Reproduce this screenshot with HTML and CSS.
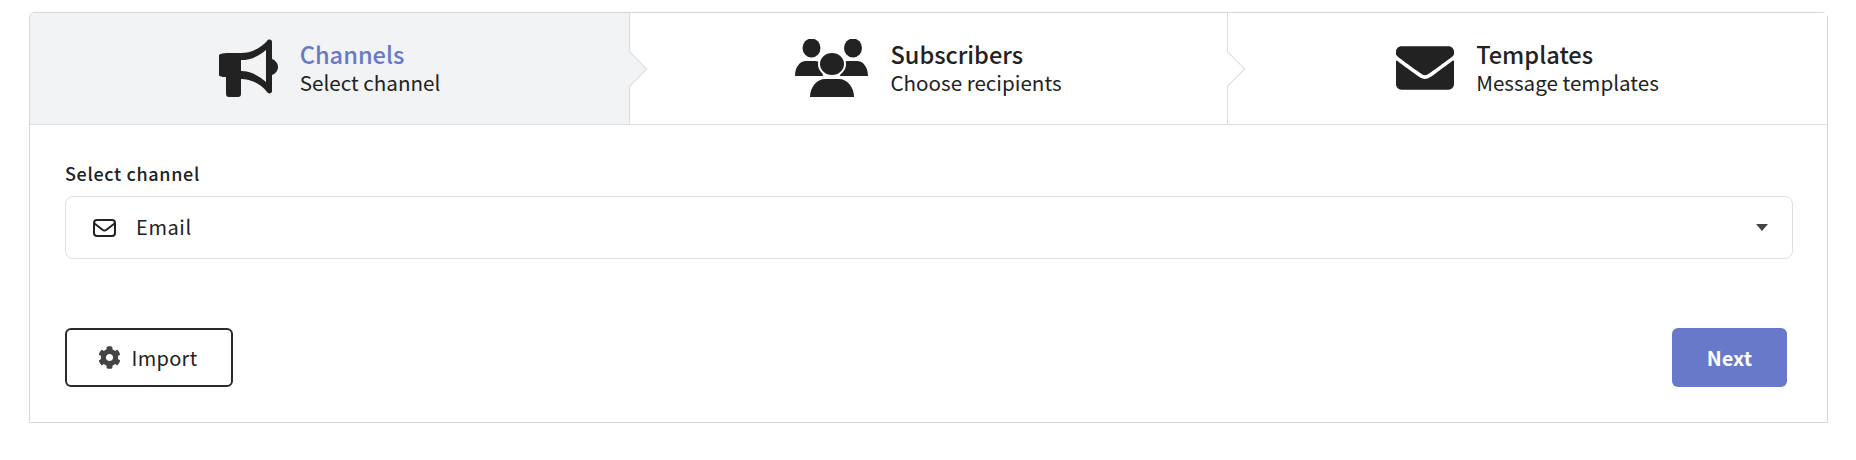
FILE: index.html
```html
<!DOCTYPE html>
<html lang="en">
<head>
  <meta charset="UTF-8" />
  <title>New campaign</title>
  <link rel="stylesheet" href="styles.css">
</head>
<body>
  <div class="card">
    <div class="pasos">
      <div class="paso activo">
        <svg class="icono" width="59" height="58" viewBox="218 39 59 58">
          <path fill="#222" fill-rule="evenodd" d="M226 53h14c10 0 20-5 26-12 1-2 5-2 5 1v17c3 1 6 4 6 8s-3 7-6 8v16c0 3-4 3-5 1-6-8-16-13-26-13v15c0 2-1 3-3 3h-9c-2 0-3-1-3-3V77h-2c-4 0-8-3-8-6V60c0-4 4-7 11-7zm14 7v11c10 0 18 5 25 11V50c-7 6-15 10-25 10z"/>
        </svg>
        <div>
          <div class="paso-titulo">Channels</div>
          <div class="paso-sub">Select channel</div>
        </div>
      </div>
      <div class="paso">
        <svg class="icono" width="73" height="58" viewBox="795 39 73 58">
          <g fill="#222">
            <ellipse cx="811.5" cy="48" rx="9" ry="9.5"/>
            <ellipse cx="853" cy="48" rx="9" ry="9.5"/>
            <path d="M795 76c0-9 5-15 11-15h9c3 0 5 2 6 4l2 11zM868 76c0-9-5-15-11-15h-9c-3 0-5 2-6 4l-2 11z"/>
            <ellipse cx="832" cy="64" rx="13" ry="12" stroke="#fff" stroke-width="2"/>
            <path d="M810 97c0-10 7-18 15-18h14c8 0 15 8 15 18z"/>
          </g>
        </svg>
        <div>
          <div class="paso-titulo">Subscribers</div>
          <div class="paso-sub">Choose recipients</div>
        </div>
      </div>
      <div class="paso">
        <svg class="icono" width="58" height="44" viewBox="0 64 512 384">
          <path fill="#222" d="M502.3 190.8c3.9-3.1 9.7-.2 9.7 4.7V400c0 26.5-21.5 48-48 48H48c-26.5 0-48-21.5-48-48V195.6c0-5 5.7-7.8 9.7-4.7 22.4 17.4 52.1 39.5 154.1 113.6 21.1 15.4 56.7 47.8 92.2 47.6 35.7.3 72-32.8 92.3-47.6 102-74.1 131.6-96.3 154-113.7zM256 320c23.2.4 56.6-29.2 73.4-41.4 132.7-96.3 142.8-104.7 173.4-128.7 5.8-4.5 9.2-11.5 9.2-18.9v-19c0-26.5-21.5-48-48-48H48C21.5 64 0 85.5 0 112v19c0 7.4 3.4 14.3 9.2 18.9 30.6 23.9 40.7 32.4 173.4 128.7 16.8 12.2 50.2 41.8 73.4 41.4z"/>
        </svg>
        <div>
          <div class="paso-titulo">Templates</div>
          <div class="paso-sub">Message templates</div>
        </div>
      </div>
    </div>

    <div class="contenido">
      <div class="etiqueta">Select channel</div>
      <div class="selector">
        <svg width="23" height="18" viewBox="0 0 23 18" fill="none" stroke="#222" stroke-width="2">
          <rect x="1" y="1" width="21" height="16" rx="3"/>
          <path d="M1.5 4.5l8 6.2c1.2.9 2.8.9 4 0l8-6.2"/>
        </svg>
        <span class="selector-texto">Email</span>
        <span class="flecha"></span>
      </div>
      <div class="acciones">
        <button class="btn btn-importar">
          <svg width="23" height="23" viewBox="0 0 512 512">
            <path fill="#444" d="M487.4 315.7l-42.6-24.6c4.3-23.2 4.3-47 0-70.2l42.6-24.6c4.9-2.8 7.1-8.6 5.5-14-11.1-35.6-30-67.8-54.7-94.6-3.8-4.1-10-5.1-14.8-2.3L380.8 110c-17.9-15.4-38.5-27.3-60.8-35.1V25.8c0-5.6-3.9-10.5-9.4-11.7-36.7-8.2-74.3-7.8-109.2 0-5.5 1.2-9.4 6.1-9.4 11.7V75c-22.2 7.9-42.8 19.8-60.8 35.1L88.7 85.5c-4.9-2.8-11-1.9-14.8 2.3-24.7 26.7-43.6 58.9-54.7 94.6-1.7 5.4.6 11.2 5.5 14L67.3 221c-4.3 23.2-4.3 47 0 70.2l-42.6 24.6c-4.9 2.8-7.1 8.6-5.5 14 11.1 35.6 30 67.8 54.7 94.6 3.8 4.1 10 5.1 14.8 2.3l42.6-24.6c17.9 15.4 38.5 27.3 60.8 35.1v49.2c0 5.6 3.9 10.5 9.4 11.7 36.7 8.2 74.3 7.8 109.2 0 5.5-1.2 9.4-6.1 9.4-11.7v-49.2c22.2-7.9 42.8-19.8 60.8-35.1l42.6 24.6c4.9 2.8 11 1.9 14.8-2.3 24.7-26.7 43.6-58.9 54.7-94.6 1.5-5.5-.7-11.3-5.6-14.1zM256 336c-44.1 0-80-35.9-80-80s35.9-80 80-80 80 35.9 80 80-35.9 80-80 80z"/>
          </svg>
          Import
        </button>
        <button class="btn btn-siguiente">Next</button>
      </div>
    </div>
  </div>
</body>
</html>
```

FILE: styles.css
```css
* { box-sizing: border-box; }
body { margin: 0; padding: 12px 28px 0 29px; background: #fff; color: #222; font-family: "Noto Sans CJK SC", "Noto Sans", sans-serif; }
.card { height: 411px; border: 1px solid #d5d6d8; border-radius: 6px 6px 0 0; display: flex; flex-direction: column; }
.pasos { display: flex; height: 112px; border-bottom: 1px solid #dcdde0; }
.paso { flex: 1; position: relative; display: flex; align-items: center; justify-content: center; gap: 22px; padding-bottom: 2px; background: #fff; }
.paso.activo { background: #f2f3f5; border-top-left-radius: 6px; }
.paso + .paso { border-left: 1px solid #dcdde0; }
.paso:not(:last-child)::after { content: ""; position: absolute; z-index: 1; top: 43px; right: -13px; width: 25px; height: 25px; background: inherit; border-top: 1px solid #dcdde0; border-right: 1px solid #dcdde0; transform: rotate(45deg); }
.paso:first-child { flex: 0 0 599px; }
.paso:nth-child(2) { flex: 0 0 598px; }
.icono { display: block; flex: none; }
.paso-titulo { font-size: 23.6px; line-height: 30px; font-weight: 500; }
.activo .paso-titulo { color: #6779c8; }
.paso-sub { font-size: 20.6px; line-height: 27px; }
.contenido { flex: 1; padding: 36px 34px 0 35px; }
.etiqueta { font-size: 18px; line-height: 24px; font-weight: 500; letter-spacing: 0.65px; }
.selector { margin-top: 11px; height: 63px; border: 1px solid #dfe0e2; border-radius: 8px; display: flex; align-items: center; padding: 0 24px 0 27px; }
.selector-texto { margin-left: 20px; padding-bottom: 2px; font-size: 20px; letter-spacing: 0.6px; }
.flecha { margin-left: auto; border-top: 7px solid #444; border-left: 6.5px solid transparent; border-right: 6.5px solid transparent; }
.acciones { margin-top: 69px; display: flex; justify-content: space-between; padding-right: 6px; }
.btn { height: 59px; border-radius: 6px; font-family: inherit; font-size: 20px; display: flex; align-items: center; justify-content: center; }
.btn-importar { width: 168px; gap: 11px; padding: 0 3px 0 0; background: #fff; border: 2px solid #2a2a2a; color: #222; letter-spacing: 0.3px; }
.btn-siguiente { width: 115px; background: #6779c8; border: none; color: #fff; font-weight: 700; }
```
